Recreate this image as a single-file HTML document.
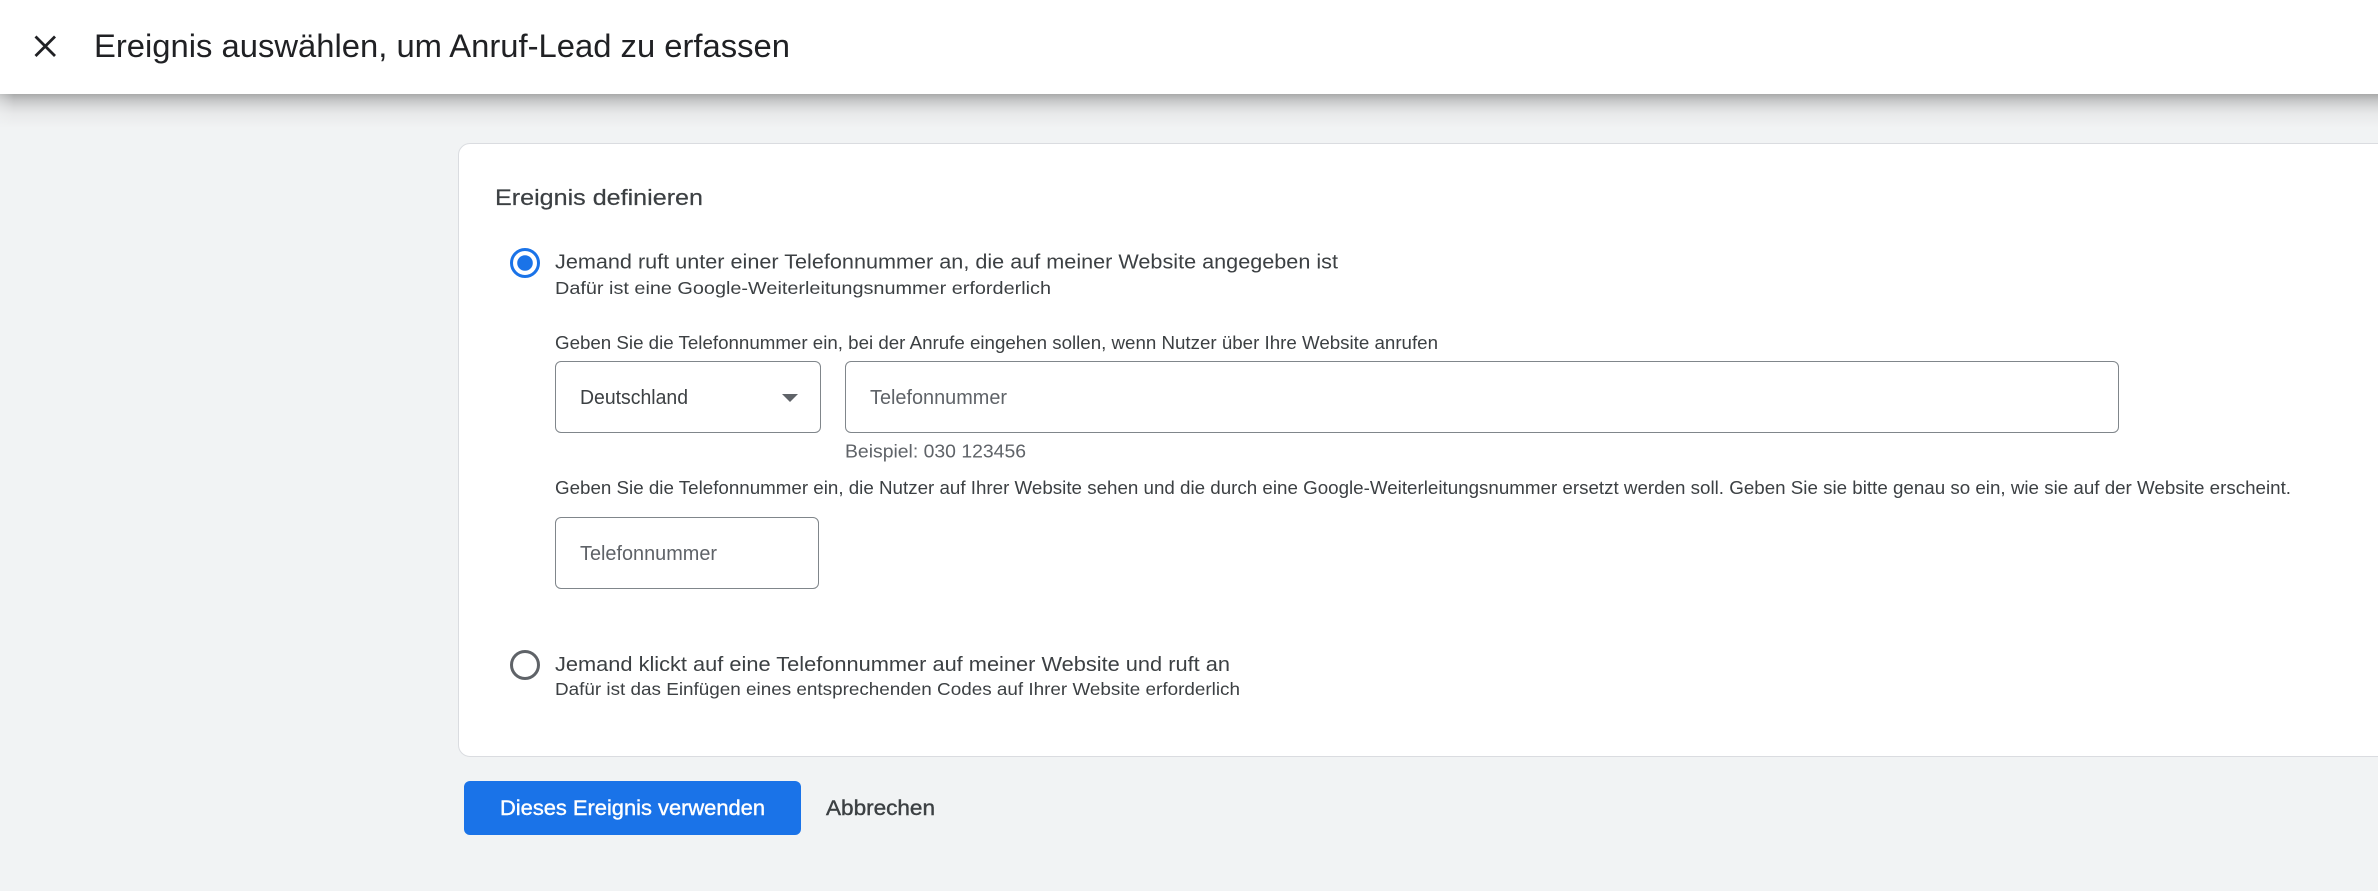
<!DOCTYPE html>
<html lang="de">
<head>
<meta charset="utf-8">
<title>Ereignis auswählen</title>
<style>
html,body{margin:0;padding:0;width:2378px;height:891px;overflow:hidden;background:#f1f3f4}
.abs{position:absolute;box-sizing:border-box}
#shadow{left:0;top:94px;width:2378px;height:34px;background:linear-gradient(#a9aaaa 0,#c4c5c6 6px,#dadbdc 13px,#e8e9ea 20px,#f1f3f4 34px)}
#fade{left:0;top:94px;width:14px;height:34px;background:linear-gradient(90deg,rgba(241,243,244,.4),rgba(241,243,244,0))}
#header{left:0;top:0;width:2378px;height:94px;background:#fff}
#card{left:458px;top:143px;width:2000px;height:614px;background:#fff;border:1.5px solid #dadce0;border-radius:12px}
.box{background:#fff;border:1.5px solid #80868b;border-radius:6px}
#btn{left:464px;top:781px;width:337px;height:54px;background:#1a73e8;border-radius:6px}
svg{position:absolute;left:0;top:0}
text{font-family:"Liberation Sans",Arial,sans-serif}
</style>
</head>
<body>
<div class="abs" id="shadow"></div>
<div class="abs" id="fade"></div>
<div class="abs" id="header"></div>
<div class="abs" id="card"></div>
<div class="abs box" style="left:555px;top:361px;width:266px;height:72px"></div>
<div class="abs box" style="left:845px;top:361px;width:1274px;height:72px"></div>
<div class="abs box" style="left:555px;top:517px;width:264px;height:72px"></div>
<div class="abs" id="btn"></div>
<svg width="2378" height="891" viewBox="0 0 2378 891">
  <path d="M35.5 36.5L55 56M55 36.5L35.5 56" stroke="#202124" stroke-width="2.8" fill="none"/>
  <text x="94" y="57" font-size="32" fill="#202124" textLength="696" lengthAdjust="spacingAndGlyphs">Ereignis auswählen, um Anruf-Lead zu erfassen</text>

  <text x="495" y="205" font-size="22" fill="#3c4043" stroke="#3c4043" stroke-width=".2" textLength="208" lengthAdjust="spacingAndGlyphs">Ereignis definieren</text>

  <circle cx="525" cy="263" r="13.5" fill="none" stroke="#1a73e8" stroke-width="3"/>
  <circle cx="525" cy="263" r="7.8" fill="#1a73e8"/>
  <text x="555" y="268.5" font-size="20.5" fill="#3c4043" textLength="783" lengthAdjust="spacingAndGlyphs">Jemand ruft unter einer Telefonnummer an, die auf meiner Website angegeben ist</text>
  <text x="555" y="294" font-size="17.5" fill="#3c4043" textLength="496" lengthAdjust="spacingAndGlyphs">Dafür ist eine Google-Weiterleitungsnummer erforderlich</text>

  <text x="555" y="349" font-size="18.5" fill="#3c4043" textLength="883" lengthAdjust="spacingAndGlyphs">Geben Sie die Telefonnummer ein, bei der Anrufe eingehen sollen, wenn Nutzer über Ihre Website anrufen</text>

  <text x="580" y="404" font-size="20" fill="#3c4043" textLength="108" lengthAdjust="spacingAndGlyphs">Deutschland</text>
  <path d="M782 394H798L790 402Z" fill="#5f6368"/>
  <text x="870" y="404" font-size="20" fill="#5f6368" textLength="137" lengthAdjust="spacingAndGlyphs">Telefonnummer</text>

  <text x="845" y="457.5" font-size="18.5" fill="#5f6368" textLength="181" lengthAdjust="spacingAndGlyphs">Beispiel: 030 123456</text>

  <text x="555" y="494" font-size="18.5" fill="#3c4043" textLength="1736" lengthAdjust="spacingAndGlyphs">Geben Sie die Telefonnummer ein, die Nutzer auf Ihrer Website sehen und die durch eine Google-Weiterleitungsnummer ersetzt werden soll. Geben Sie sie bitte genau so ein, wie sie auf der Website erscheint.</text>

  <text x="580" y="560" font-size="20" fill="#5f6368" textLength="137" lengthAdjust="spacingAndGlyphs">Telefonnummer</text>

  <circle cx="525" cy="665" r="13.5" fill="none" stroke="#5f6368" stroke-width="3"/>
  <text x="555" y="671" font-size="20.5" fill="#3c4043" textLength="675" lengthAdjust="spacingAndGlyphs">Jemand klickt auf eine Telefonnummer auf meiner Website und ruft an</text>
  <text x="555" y="695" font-size="17.5" fill="#3c4043" textLength="685" lengthAdjust="spacingAndGlyphs">Dafür ist das Einfügen eines entsprechenden Codes auf Ihrer Website erforderlich</text>

  <text x="500" y="815" font-size="21" fill="#fff" stroke="#fff" stroke-width=".4" textLength="265" lengthAdjust="spacingAndGlyphs">Dieses Ereignis verwenden</text>
  <text x="826" y="815" font-size="21" fill="#3c4043" stroke="#3c4043" stroke-width=".4" textLength="109" lengthAdjust="spacingAndGlyphs">Abbrechen</text>
</svg>
</body>
</html>
